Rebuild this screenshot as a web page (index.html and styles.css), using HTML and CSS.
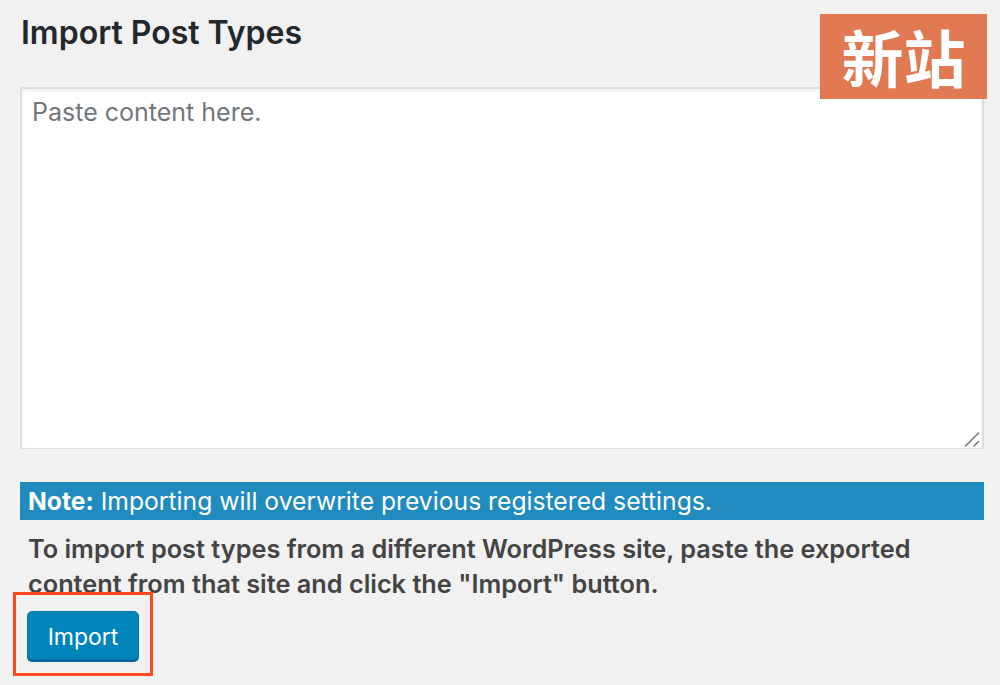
FILE: index.html
```html
<!DOCTYPE html>
<html lang="en">
<head>
<meta charset="utf-8">
<title>Import Post Types</title>
<link rel="stylesheet" href="styles.css">
</head>
<body>
<div class="page">
  <h1 class="title">Import Post Types</h1>
  <div class="field">
    <textarea class="import-box" placeholder="Paste content here."></textarea>
    <svg class="grip" width="16" height="16" viewBox="0 0 16 16" aria-hidden="true">
      <path d="M1.5 15 L14.5 2 M10 15 L14.5 10.5" stroke="#7a7a7a" stroke-width="1.6" stroke-linecap="round" fill="none"/>
    </svg>
  </div>
  <p class="notice"><strong>Note:</strong> Importing will overwrite previous registered settings.</p>
  <p class="help">To import post types from a different WordPress site, paste the exported content from that site and click the "Import" button.</p>
  <div class="highlight">
    <button class="button-primary" type="button">Import</button>
  </div>
  <div class="badge">新站</div>
</div>
</body>
</html>
```
FILE: styles.css
```css
html, body {
  margin: 0;
  padding: 0;
  background: #f1f1f1;
}

.page {
  position: relative;
  height: 685px;
  box-sizing: border-box;
  padding: 0 16px 0 20px;
  display: flex;
  flex-direction: column;
  align-items: flex-start;
  font-family: Inter, "Noto Sans", sans-serif;
  overflow: hidden;
}

.title {
  margin: 13px 0 0 1px;
  font-size: 32px;
  line-height: 40px;
  font-weight: 600;
  color: #23282d;
}

.field {
  position: relative;
  margin-top: 34px;
  width: 100%;
  height: 362px;
}

.import-box {
  display: block;
  width: 100%;
  height: 100%;
  box-sizing: border-box;
  border: 2px solid #dedede;
  border-bottom-width: 1px;
  background: #fff;
  box-shadow: inset 0 2px 4px rgba(0, 0, 0, 0.06);
  padding: 6px 10px;
  font-family: inherit;
  font-size: 25px;
  line-height: 34px;
  color: #32373c;
  resize: none;
}

.import-box::placeholder {
  color: #72777c;
}

/* resize grip drawn over the bottom-right corner of the field */
.grip {
  position: absolute;
  right: 4px;
  bottom: 2px;
}

.notice {
  margin: 33px 0 0;
  width: 100%;
  box-sizing: border-box;
  background: #208bbf;
  color: #fff;
  padding: 0 8px;
  font-size: 24.7px;
  line-height: 38px;
  white-space: nowrap;
}

.notice strong {
  font-weight: 700;
}

.help {
  margin: 11px 0 0;
  padding: 0 8px;
  font-size: 25.3px;
  line-height: 35px;
  font-weight: 600;
  color: #444;
}

.highlight {
  margin: -9px 0 0 -7px;
  border: 3px solid #fb4b1e;
  padding: 16px 11px 13px;
}

.button-primary {
  display: block;
  width: 112px;
  height: 49px;
  box-sizing: border-box;
  background: #0085ba;
  border: 1px solid #0073aa;
  border-radius: 5px;
  box-shadow: 0 2px 0 #006799;
  color: #fff;
  font-family: inherit;
  font-size: 23px;
  line-height: 1;
  padding: 3px 0 0;
}

.badge {
  position: absolute;
  top: 14px;
  left: 820px;
  width: 167px;
  height: 85px;
  background: #e17a52;
  color: #fff;
  font-family: "Noto Sans CJK SC", sans-serif;
  font-weight: 700;
  font-size: 62px;
  line-height: 85px;
  text-align: center;
}
```
